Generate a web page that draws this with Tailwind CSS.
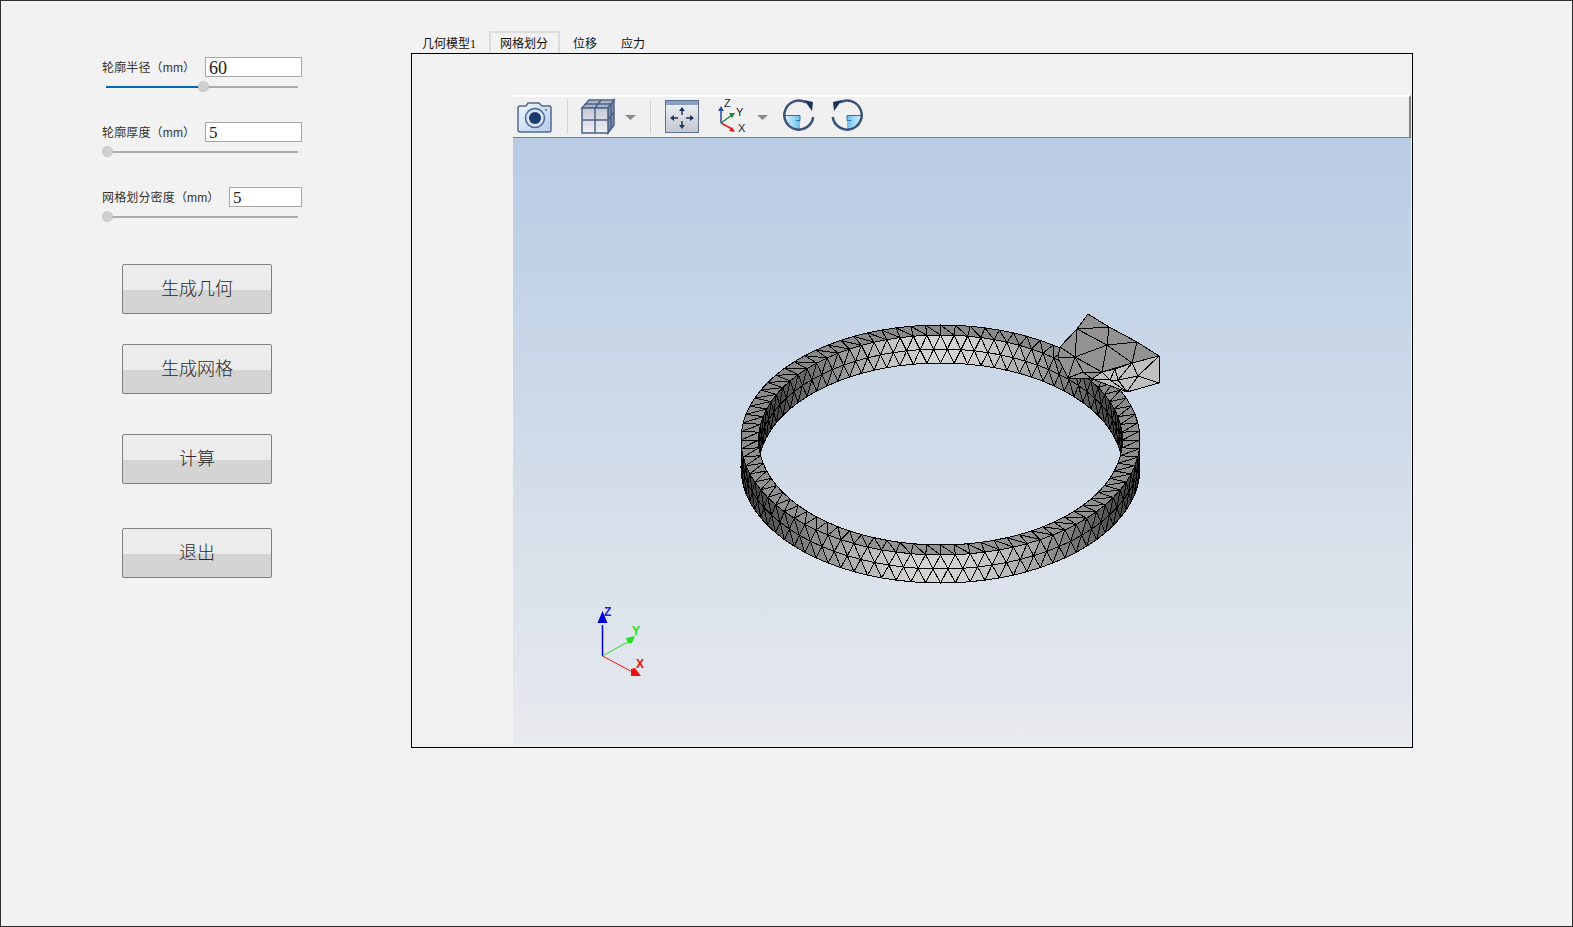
<!DOCTYPE html>
<html lang="zh-CN">
<head>
  <meta charset="UTF-8"/>
  <title>网格划分</title>
  <script src="https://cdn.jsdelivr.net/npm/@tailwindcss/browser@4"></script>
</head>
<body class="w-[1573px] h-[927px] overflow-hidden bg-[#f2f2f2] border border-[#2e2e2e] flex font-['Liberation_Sans','Noto_Sans_CJK_SC',sans-serif]">

<!-- left: parameters + buttons -->
<aside class="w-[410px] shrink-0 pt-[56px] pl-[101px] text-[#333]">
  <div class="w-[200px] h-[65px]">
    <div class="flex items-center justify-between h-[20px]">
      <span class="text-[12px] pt-[2px] tracking-[0.15px]">轮廓半径（mm）</span>
      <input value="60" class="w-[97px] h-[20px] bg-white border border-[#a6a6a6] pl-[3px] pt-[2px] text-[18px] text-[#222] font-['Liberation_Serif',serif]"/>
    </div>
    <div class="relative h-[2px] mt-[9px] ml-[4px] w-[192px] bg-[#ababab]">
      <div class="h-full w-[97px] bg-[#0a64b4]"></div>
      <div class="absolute left-[92px] top-[-5px] w-[11px] h-[11px] rounded-full bg-[#d0d0d0] border border-dotted border-[#bdbdbd]"></div>
    </div>
  </div>
  <div class="w-[200px] h-[65px]">
    <div class="flex items-center justify-between h-[20px]">
      <span class="text-[12px] pt-[2px] tracking-[0.15px]">轮廓厚度（mm）</span>
      <input value="5" class="w-[97px] h-[20px] bg-white border border-[#a6a6a6] pl-[3px] pt-[2px] text-[17px] text-[#222] font-['Liberation_Serif',serif]"/>
    </div>
    <div class="relative h-[2px] mt-[9px] ml-[4px] w-[192px] bg-[#ababab]">
      <div class="absolute left-[-4px] top-[-5px] w-[11px] h-[11px] rounded-full bg-[#d0d0d0] border border-dotted border-[#bdbdbd]"></div>
    </div>
  </div>
  <div class="w-[200px] h-[65px]">
    <div class="flex items-center justify-between h-[20px]">
      <span class="text-[12px] pt-[2px] tracking-[0.15px]">网格划分密度（mm）</span>
      <input value="5" class="w-[73px] h-[20px] bg-white border border-[#a6a6a6] pl-[3px] pt-[2px] text-[17px] text-[#222] font-['Liberation_Serif',serif]"/>
    </div>
    <div class="relative h-[2px] mt-[9px] ml-[4px] w-[192px] bg-[#ababab]">
      <div class="absolute left-[-4px] top-[-5px] w-[11px] h-[11px] rounded-full bg-[#d0d0d0] border border-dotted border-[#bdbdbd]"></div>
    </div>
  </div>

  <button class="block ml-[20px] mt-[12px] w-[150px] h-[50px] rounded-[2px] border border-[#808080] bg-[linear-gradient(#ececec_52%,#d4d4d4_52%)] text-[18px] font-light text-[#2a2a2a]">生成几何</button>
  <button class="block ml-[20px] mt-[30px] w-[150px] h-[50px] rounded-[2px] border border-[#808080] bg-[linear-gradient(#ececec_52%,#d4d4d4_52%)] text-[18px] font-light text-[#2a2a2a]">生成网格</button>
  <button class="block ml-[20px] mt-[40px] w-[150px] h-[50px] rounded-[2px] border border-[#808080] bg-[linear-gradient(#ececec_52%,#d4d4d4_52%)] text-[18px] font-light text-[#2a2a2a]">计算</button>
  <button class="block ml-[20px] mt-[44px] w-[150px] h-[50px] rounded-[2px] border border-[#808080] bg-[linear-gradient(#ececec_52%,#d4d4d4_52%)] text-[18px] font-light text-[#2a2a2a]">退出</button>
</aside>

<!-- right: tabs + viewer -->
<main class="w-[1002px] shrink-0 pt-[30px]">
  <div class="flex h-[22px] items-end text-[12px] text-[#111]">
    <span class="w-[78px] pl-[11px] pb-[1px] leading-[16px]">几何模型<span class="font-['Liberation_Serif',serif]">1</span></span>
    <span class="w-[71px] h-[22px] pl-[9px] pt-[3px] leading-[16px] bg-[#f2f2f2] border-2 border-b-0 border-[#dcdcdc]">网格划分</span>
    <span class="w-[48px] pl-[13px] pb-[1px] leading-[16px]">位移</span>
    <span class="w-[48px] pl-[13px] pb-[1px] leading-[16px]">应力</span>
  </div>
  <div class="h-[695px] border border-black pt-[41px] pl-[101px] pr-[1px] pb-[1px]">
    <div class="h-full flex flex-col">
      <!-- toolbar -->
      <div class="h-[43px] shrink-0 relative border-t-2 border-t-white border-r-2 border-r-[#808080] border-b border-b-[#808080] bg-[#f0f0f0]">
        <svg class="absolute left-0 top-[-2px]" width="400" height="43" viewBox="513 95 400 43" xmlns="http://www.w3.org/2000/svg">
          <defs>
            <linearGradient id="cam" x1="0" y1="0" x2="1" y2="1"><stop offset="0" stop-color="#f0f5fb"/><stop offset="1" stop-color="#b3cdec"/></linearGradient>
            <linearGradient id="face" x1="0" y1="0" x2="0" y2="1"><stop offset="0" stop-color="#c3c8d2"/><stop offset="1" stop-color="#eff0f3"/></linearGradient>
            <linearGradient id="win" x1="0" y1="0" x2="0" y2="1"><stop offset="0" stop-color="#f2f3f5"/><stop offset="1" stop-color="#c2c6d1"/></linearGradient>
            <linearGradient id="quadL" x1="0" y1="0" x2="1" y2="0"><stop offset="0" stop-color="#d4eefb"/><stop offset="1" stop-color="#6cc2ef"/></linearGradient>
            <linearGradient id="quadR" x1="0" y1="0" x2="1" y2="0"><stop offset="0" stop-color="#6cc2ef"/><stop offset="1" stop-color="#d4eefb"/></linearGradient>
          </defs>
          <!-- camera -->
          <path d="M520 106h6l2-3h11l3 3h7a2 2 0 0 1 2 2v22a2 2 0 0 1-2 2h-29a2 2 0 0 1-2-2v-22a2 2 0 0 1 2-2z" fill="url(#cam)" stroke="#54698c" stroke-width="1.5"/>
          <circle cx="535" cy="118" r="9.5" fill="#d6e4f4" stroke="#4b648f" stroke-width="1.5"/>
          <circle cx="535" cy="118" r="6" fill="#1c3a72"/>
          <circle cx="546" cy="110" r="1" fill="#54698c"/>
          <path d="M567.5 99v35M650.5 99v35" stroke="#d2d2d2"/>
          <!-- cube -->
          <path d="M582 108l7-8h25l-6 8z" fill="#a9b4c6" stroke="#4c6187" stroke-width="1.5"/>
          <path d="M608 108l6-8v25l-6 8z" fill="#7f8eab" stroke="#4c6187" stroke-width="1.5"/>
          <rect x="582" y="108" width="26" height="25" fill="url(#face)" stroke="#4c6187" stroke-width="1.5"/>
          <path d="M595 108v25M582 120h26M601 100l-6 8M585 104h26M611 104v25M608 120l6-8" stroke="#4c6187" stroke-width="1.5" fill="none"/>
          <path d="M625 115h11l-5.500 5z" fill="#8a8a8a"/>
          <!-- fit view -->
          <rect x="665.500" y="100.500" width="33" height="32" fill="url(#win)" stroke="#5c6f92"/>
          <rect x="666" y="101" width="32" height="4" fill="#8ba0c0"/>
          <path d="M682 110v5M682 121v5M673 118h5M686 118h5" stroke="#1f3560" stroke-width="1.500"/>
          <path d="M682 107l-3 4h6zM682 129l-3-4h6zM670 118l4-3v6zM694 118l-4-3v6z" fill="#1f3560"/>
          <!-- axes -->
          <path d="M721 123v-14" stroke="#2b4a9a" stroke-width="1.500"/>
          <path d="M721 106l-3 5h6z" fill="#2b4a9a"/>
          <path d="M721 123l11-8" stroke="#138a3c" stroke-width="1.500"/>
          <path d="M735 113l-6 0 3 5z" fill="#138a3c"/>
          <path d="M721 123l11 6" stroke="#e01b24" stroke-width="1.500"/>
          <path d="M735 132l-6-1 3-4z" fill="#e01b24"/>
          <text x="724" y="107" font-size="11" fill="#222" font-family="Liberation Sans">Z</text>
          <text x="736" y="116" font-size="11" fill="#222" font-family="Liberation Sans">Y</text>
          <text x="738" y="132" font-size="11" fill="#222" font-family="Liberation Sans">X</text>
          <path d="M757 115h11l-5.500 5z" fill="#8a8a8a"/>
          <!-- rotate cw -->
          <path d="M786 115h14v14a14 14 0 0 1-14-14z" fill="url(#quadL)"/>
          <path d="M785 115.500h15v5h-4" fill="none" stroke="#2a72b8" stroke-width="1"/>
          <path d="M813.200 117A14.500 14.500 0 1 1 806 102.500" fill="none" stroke="#3b5378" stroke-width="2.500"/>
          <path d="M804 100l9 2-1 9z" fill="#1c3358"/>
          <!-- rotate ccw -->
          <path d="M861 115h-14v14a14 14 0 0 0 14-14z" fill="url(#quadR)"/>
          <path d="M862 115.500h-15v5h4" fill="none" stroke="#2a72b8" stroke-width="1"/>
          <path d="M832.800 117A14.500 14.500 0 1 0 840 102.500" fill="none" stroke="#3b5378" stroke-width="2.500"/>
          <path d="M842 100l-9 2 1 9z" fill="#1c3358"/>
        </svg>
      </div>
      <!-- 3d view -->
      <div class="flex-1 min-h-0 bg-[linear-gradient(#b8cce4,#e8eaee)]">
        <svg id="scene" class="block" width="898" height="609" viewBox="513 138 898 609" xmlns="http://www.w3.org/2000/svg">
          <g id="mesh" stroke="#000" stroke-width="1" shape-rendering="crispEdges" stroke-linejoin="round"></g>
          <!-- triad -->
          <path d="M602.500 656V625" stroke="#0000e0" stroke-width="1.500" fill="none"/>
          <path d="M602.500 611l-5 12h10z" fill="#0000e0"/>
          <path d="M602.500 656l25-14" stroke="#22dd22" fill="none"/>
          <path d="M626 638l9-2-3 7h-4z" fill="#22dd22"/>
          <path d="M602.500 656l28 15" stroke="#ee1111" fill="none"/>
          <path d="M631 669l4-1 6 8h-10z" fill="#ee1111"/>
          <text x="604" y="616" font-size="12" font-weight="bold" fill="#1a1ae6" font-family="Liberation Sans">Z</text>
          <text x="632" y="635" font-size="12" font-weight="bold" fill="#22dd22" font-family="Liberation Sans">Y</text>
          <text x="636" y="668" font-size="12" font-weight="bold" fill="#ee1111" font-family="Liberation Sans">X</text>
        </svg>
      </div>
    </div>
  </div>
</main>

<script>
// ring mesh: walls and top surface, painter's order back to front
const cx = 940.5, cy = 440, H = 28, N = 84;
const RO = [199.5, 115], RI = [182, 105];
const out = [];
const pt = (R, a, dz = 0) => [cx + R[0] * Math.cos(a), cy + R[1] * Math.sin(a) + dz];
const tri = (a, b, c, f) => out.push(
  `<polygon points="${a[0].toFixed(1)},${a[1].toFixed(1)} ${b[0].toFixed(1)},${b[1].toFixed(1)} ${c[0].toFixed(1)},${c[1].toFixed(1)}" fill="${f}"/>`);
const grey = v => { const g = Math.round(v); return `rgb(${g},${g},${g})`; };
const wallShade = a => 62 + 150 * Math.pow(Math.abs(Math.sin(a)), 3);

// one wall band, from -pi..0 (back, inner) or 0..pi (front, outer)
function wall(R, from, to) {
  for (let i = 0; i < N / 2; i++) {
    const a = from + (to - from) * i / (N / 2), b = from + (to - from) * (i + 1) / (N / 2), m = (a + b) / 2;
    const nx = from + (to - from) * (i + 1.5) / (N / 2);
    const f = grey(wallShade(m));
    tri(pt(R, a), pt(R, b), pt(R, m, H / 2), f);
    tri(pt(R, m, H / 2), pt(R, b), pt(R, nx, H / 2), f);
    tri(pt(R, a, H), pt(R, b, H), pt(R, m, H / 2), f);
    tri(pt(R, m, H / 2), pt(R, b, H), pt(R, nx, H / 2), f);
  }
}
wall(RI, -Math.PI, 0);
wall(RO, 0, Math.PI);

// top annulus
for (let i = 0; i < N; i++) {
  const a = i * 2 * Math.PI / N, b = (i + 1) * 2 * Math.PI / N;
  const f = grey(141 + 5 * Math.sin(a));
  tri(pt(RO, a), pt(RO, b), pt(RI, b), f);
  tri(pt(RO, a), pt(RI, b), pt(RI, a), f);
}

// tab at upper right, hand-placed nodes
const n = {
  A:[1088,314], B:[1159,356], C:[1159,383], D:[1127,392],
  P1:[1109,327], P2:[1137,342], P3:[1107,345], P4:[1077,329],
  P5:[1075,357], P6:[1132,363], P7:[1102,372], P8:[1083,372],
  P9:[1092,379], R1:[1060,347], R2:[1058,358], R3:[1068,378],
  L1:[1138,376], L2:[1118,380], L3:[1115,369], L4:[1110,380]
};
const dark = ['A P1 P4','P4 P1 P3','P1 P2 P3','P2 B P6','P2 P6 P3','P3 P6 P7','P3 P7 P5','P4 P3 P5','R1 P4 P5','R1 P5 R2','R2 P5 R3','P5 P8 R3','P5 P7 P8','P8 P7 P9','R3 P8 P9'];
const light = ['B L1 P6','B C L1','C D L1','L1 D L2','L1 L2 P6','P6 L2 L3','P6 L3 P7','P7 L3 L4','L3 L2 L4','P7 L4 P9','L4 L2 D','P9 L4 D'];
dark.forEach(t => { const [a, b, c] = t.split(' '); tri(n[a], n[b], n[c], '#929292'); });
light.forEach(t => { const [a, b, c] = t.split(' '); tri(n[a], n[b], n[c], '#c0c0c0'); });

document.getElementById('mesh').innerHTML = out.join('');
</script>
</body>
</html>
